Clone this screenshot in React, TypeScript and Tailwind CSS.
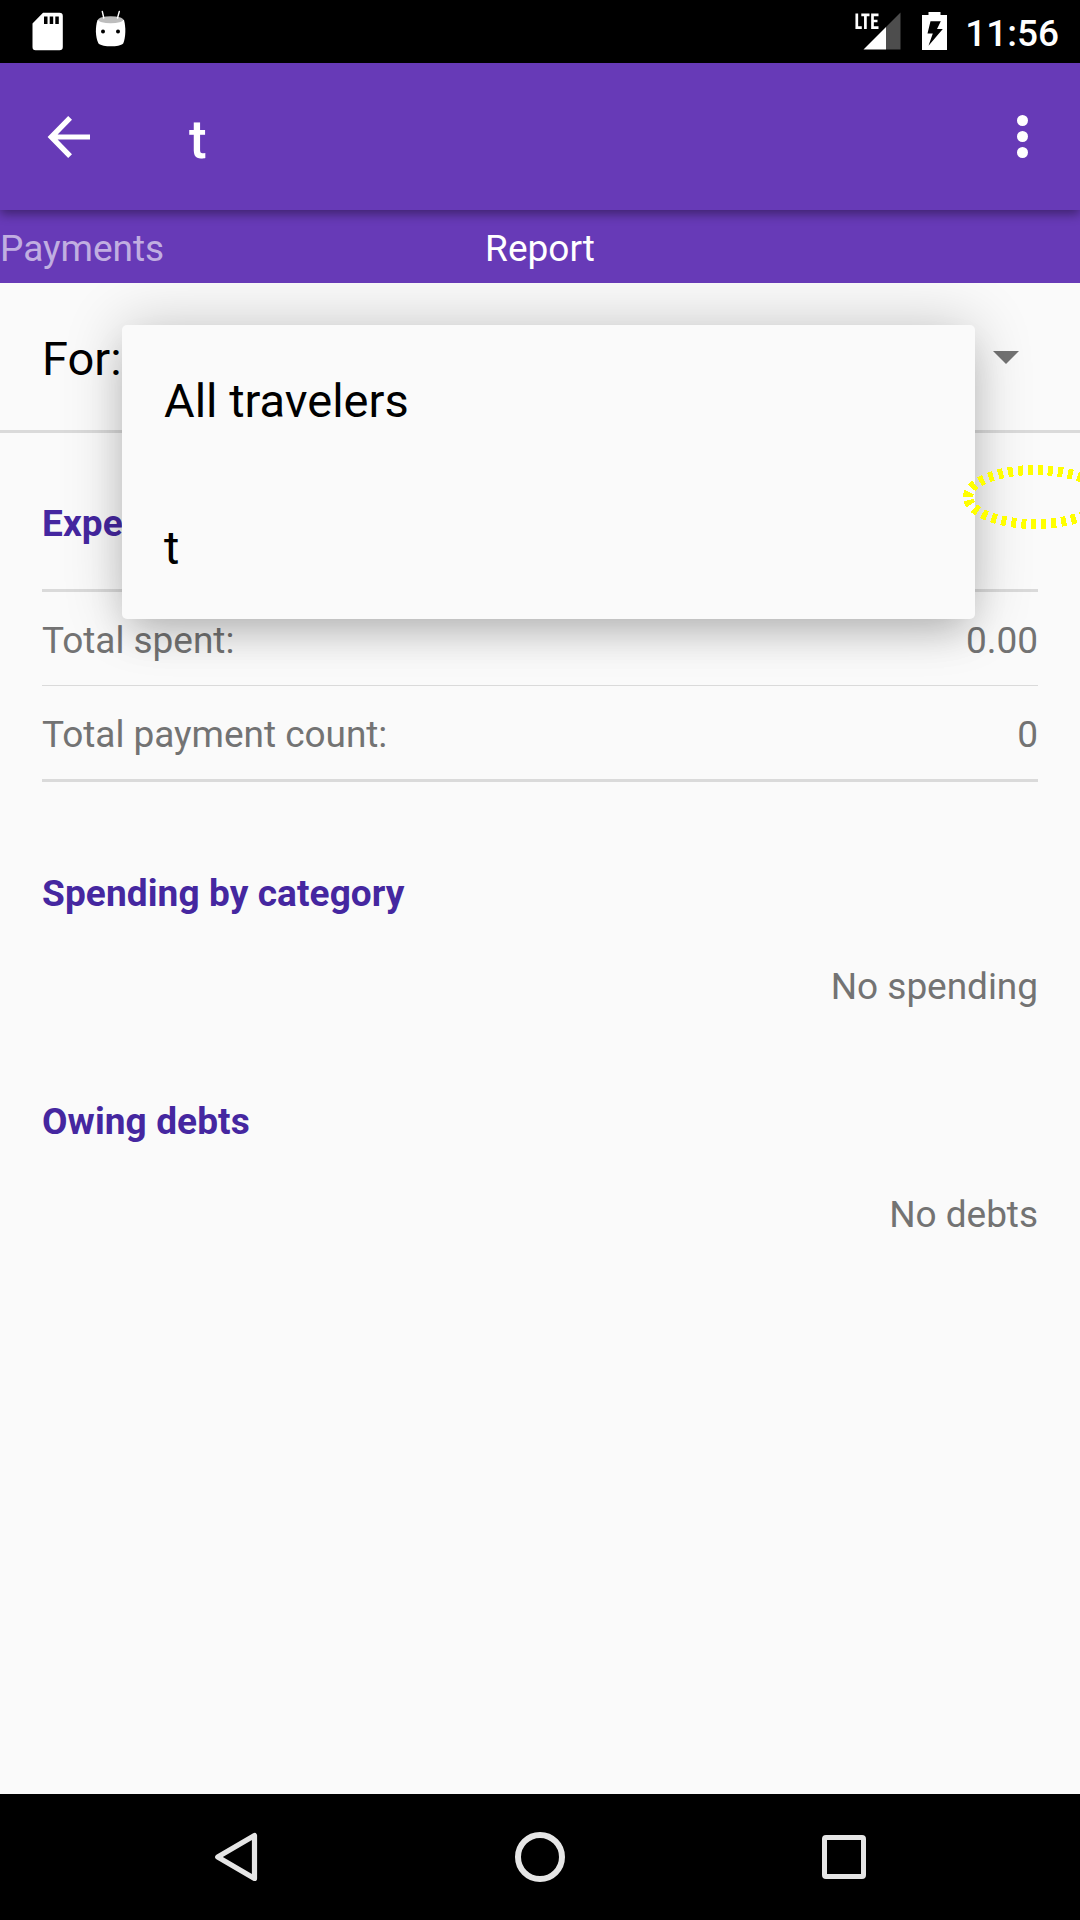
import React from "react";

const TOOLBAR_TITLE = "t";

function StatusBar() {
  return (
    <header className="flex h-[63px] items-start bg-black text-white">
      <svg className="ml-[32px] mt-[12px] h-[39px] w-[31px]" viewBox="0 0 31 39">
        <path d="M11 .7H27.5a3.300 3.300 0 0 1 3.300 3.300V35a3.300 3.300 0 0 1-3.300 3.300H4A3.300 3.300 0 0 1 .5 35V11.500Z" fill="#fff" />
        <path d="M12 4.500h3.500V12H12zM17.700 4.500h3.500V12h-3.500zM23.300 4.500h3.500V12h-3.500z" fill="#000" />
      </svg>
      <svg className="ml-[32px] mt-[10px] h-[38px] w-[32px]" viewBox="0 0 32 38">
        <path d="M2.500 10C8 6.500 24 6.500 29 10c1.900 7 1.900 17-.8 23.500C24 37.300 8 37.300 3.500 33.500 .200 27 .200 17 2.500 10Z" fill="#fff" />
        <ellipse cx="15.700" cy="9.700" rx="12.500" ry="3.500" fill="#bdbdbd" />
        <path d="M7.300 1.500 8.800 8M24.300 1.500 22.500 8" stroke="#fff" strokeWidth="1.400" strokeLinecap="round" />
        <circle cx="8" cy="21.500" r="2" fill="#000" />
        <circle cx="23" cy="21.500" r="2" fill="#000" />
      </svg>
      <div className="flex-1" />
      <svg className="mt-[12px] h-[38px] w-[46px]" viewBox="0 0 46 38">
        <path d="M45.500 .5V37.500H31V15Z" fill="#4d4d4d" />
        <path d="M31 15V37.500H8.500Z" fill="#fff" />
        <path d="M1.800 1.500V15.700H6.800M6.300 2.800H14.500M10.400 2.800V17M23.500 2.800H17.500V15.700H23.500M17.500 9H22.500" fill="none" stroke="#fff" strokeWidth="2.700" />
      </svg>
      <svg className="ml-[21px] mt-[12px] h-[38px] w-[25px]" viewBox="0 0 25 38">
        <path d="M6.500 0h12v3H25V38H0V3h6.500Z" fill="#fff" />
        <path d="M8.500 9.200H18.800L15 17H20.800L6.500 33.800 10.800 21.500H5.500Z" fill="#000" />
      </svg>
      <span className="ml-[18px] mr-[21px] mt-[2px] text-[37px] font-medium leading-[63px]">11:56</span>
    </header>
  );
}

function Toolbar() {
  return (
    <div className="relative z-10 flex h-[147px] items-center bg-[#673ab7] text-white shadow-[0_4px_10px_rgba(0,0,0,0.4)]">
      <svg className="ml-[47px] h-[42px] w-[43px]" viewBox="0 0 43 42">
        <path d="M43 18.400V23.600H10.600L25 38.200 21.200 42 .6 21 21.200 0 25 3.800 10.600 18.400Z" fill="#fff" />
      </svg>
      <h1 className="ml-[99px] mt-[7px] text-[53px] font-medium leading-[60px]">{TOOLBAR_TITLE}</h1>
      <div className="flex-1" />
      <div className="mr-[52px] flex flex-col gap-[5px]">
        <i className="h-[11px] w-[11px] rounded-full bg-white" />
        <i className="h-[11px] w-[11px] rounded-full bg-white" />
        <i className="h-[11px] w-[11px] rounded-full bg-white" />
      </div>
    </div>
  );
}

function Tabs() {
  return (
    <nav className="grid h-[73px] grid-cols-3 bg-[#673ab7] pt-[2px] text-[37px] leading-[73px] text-white">
      <span className="text-white/60">Payments</span>
      <span className="text-center">Report</span>
    </nav>
  );
}

function SectionTitle({ children }: { children: React.ReactNode }) {
  return <h2 className="text-[37px] font-bold leading-[43px] tracking-[0.1px] text-[#4527a0]">{children}</h2>;
}

function TotalRow({ label, value }: { label: string; value: string }) {
  return (
    <div className="flex h-[93px] items-center justify-between pt-[3px]">
      <span>{label}</span>
      <span>{value}</span>
    </div>
  );
}

function TravelerMenu() {
  return (
    <ul className="absolute left-[122px] top-[42px] h-[294px] w-[853px] rounded-[5px] bg-[#fafafa] pl-[42px] text-[47px] tracking-normal text-black shadow-[0_0_60px_rgba(0,0,0,0.2),0_20px_36px_-8px_rgba(0,0,0,0.18)]">
      <li className="flex h-[147px] items-center pt-[3px]">All travelers</li>
      <li className="flex h-[147px] items-center pt-[3px]">t</li>
    </ul>
  );
}

function FocusRing() {
  return (
    <svg className="absolute right-0 top-[177px] h-[74px] w-[120px]" viewBox="960 460 120 74" shapeRendering="crispEdges">
      <path d="M968 497A67 27 0 0 1 1102 497A67 27 0 0 1 968 497" fill="none" stroke="#ff0" strokeWidth="10" strokeDasharray="5 5" />
    </svg>
  );
}

export default function App() {
  return (
    <div className="flex h-[1920px] w-[1080px] flex-col overflow-hidden bg-[#fafafa] font-[Roboto,sans-serif]">
      <StatusBar />
      <Toolbar />
      <Tabs />
      <main className="relative flex-1 overflow-hidden text-[37px] leading-[43px] tracking-[-0.04px] text-[#737373]">
        <div className="flex h-[150px] items-center justify-between border-b-[3px] border-[#dadada] pl-[42px] pr-[61px] text-[47px] tracking-normal text-black">
          <span className="pt-[3px]">For:</span>
          <svg className="mt-[2px] h-[13px] w-[26px]" viewBox="0 0 26 13">
            <path d="M0 0H26L13 13Z" fill="#737373" />
          </svg>
        </div>
        <div className="px-[42px]">
          <section className="pt-[69px]">
            <SectionTitle>Expenses</SectionTitle>
            <div className="mt-[44px] border-y-[3px] border-[#dadada]">
              <TotalRow label="Total spent:" value="0.00" />
              <div className="h-px bg-[#dadada]" />
              <TotalRow label="Total payment count:" value="0" />
            </div>
          </section>
          <section className="pt-[90px]">
            <SectionTitle>Spending by category</SectionTitle>
            <p className="pt-[50px] text-right">No spending</p>
          </section>
          <section className="pt-[92px]">
            <SectionTitle>Owing debts</SectionTitle>
            <p className="pt-[50px] text-right">No debts</p>
          </section>
        </div>
        <TravelerMenu />
        <FocusRing />
      </main>
      <footer className="flex h-[126px] items-center bg-black">
        <svg className="ml-[214px] h-[50px] w-[44px]" viewBox="0 0 44 50">
          <path d="M40.500 3.500V46.500L3.700 25Z" fill="none" stroke="#e6e6e6" strokeWidth="5.200" strokeLinejoin="round" />
        </svg>
        <div className="ml-[257px] h-[50px] w-[50px] rounded-full border-[6px] border-[#e6e6e6]" />
        <div className="ml-[257px] h-[44px] w-[44px] rounded-[4px] border-[5px] border-[#e6e6e6]" />
      </footer>
    </div>
  );
}
